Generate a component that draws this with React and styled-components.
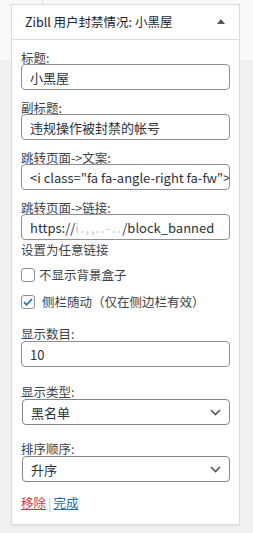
import React from "react";
import styled, { createGlobalStyle } from "styled-components";

const GlobalStyle = createGlobalStyle`
  html, body {
    margin: 0;
    padding: 0;
  }
  body {
    background: #f0f0f1;
    font-family: "Noto Sans CJK SC", "Noto Sans", sans-serif;
    color: #3c434a;
  }
`;

const Page = styled.div`
  min-height: 533px;
  padding: 4px 13px 0 11px;
  box-sizing: border-box;
  background:
    linear-gradient(#dcdcde, #dcdcde) 42px 0 / 1px 4px no-repeat,
    linear-gradient(#f9f9f9 0, #f9f9f9 60px, #f0f0f1 60px, #f0f0f1 100%);
`;

const Widget = styled.div`
  width: 229px;
  box-sizing: border-box;
  background: #fff;
  border: 1px solid #dcdcde;
  box-shadow: 0 1px 1px rgba(0, 0, 0, 0.04);
`;

const Header = styled.div`
  display: flex;
  align-items: center;
  justify-content: space-between;
  height: 34px;
  padding: 0 14px 0 13px;
  border-bottom: 1px solid #dcdcde;
`;

const Title = styled.h3`
  margin: 0;
  font-size: 12.5px;
  font-weight: 400;
  line-height: 16px;
  color: #1d2327;
`;

const Arrow = styled.span`
  width: 0;
  height: 0;
  border-left: 4px solid transparent;
  border-right: 4px solid transparent;
  border-bottom: 5px solid #50575e;
  margin-top: -1px;
`;

const Body = styled.div`
  padding: 11px 9px 14px 9px;
`;

const Field = styled.div`
  display: flex;
  flex-direction: column;
  gap: ${(p) => p.$gap || 0}px;
  margin-bottom: ${(p) => p.$mb || 11}px;
`;

const Label = styled.label`
  font-size: 12.5px;
  line-height: 13px;
  color: #3c434a;
`;

const Input = styled.div`
  height: 26px;
  box-sizing: border-box;
  border: 1px solid #8c8f94;
  border-radius: 4px;
  padding: 0 8px;
  display: flex;
  align-items: center;
  font-size: 13px;
  color: #2c3338;
  white-space: nowrap;
  overflow: hidden;
`;

const Blur = styled.span`
  color: #c4c6c9;
  letter-spacing: 1.5px;
`;

const Select = styled(Input)`
  justify-content: space-between;
  margin-left: 1px;
  padding-right: 8px;
  border-color: #7e8993;
`;

const Chevron = styled.svg`
  width: 11px;
  height: 7px;
`;

const Note = styled.div`
  font-size: 12.5px;
  line-height: 13px;
  margin: -8px 0 11px;
`;

const CheckRow = styled.label`
  display: flex;
  align-items: center;
  gap: ${(p) => p.$gap}px;
  font-size: 12.5px;
  line-height: 16px;
  margin-bottom: ${(p) => p.$mb}px;
`;

const Box = styled.span`
  width: 14px;
  height: 14px;
  box-sizing: border-box;
  border: 1px solid #8c8f94;
  border-radius: 3px;
  display: flex;
  align-items: center;
  justify-content: center;
  flex-shrink: 0;
`;

const Actions = styled.div`
  font-size: 12.5px;
  line-height: 14px;
  display: flex;
  align-items: center;
  gap: 2px;
`;

const Remove = styled.a`
  color: #d63638;
  text-decoration: underline;
`;

const Done = styled.a`
  color: #2271b1;
  text-decoration: underline;
`;

const Sep = styled.span`
  color: #c3c4c7;
`;

function Arr() {
  return (
    <Chevron viewBox="0 0 11 7">
      <path d="M1 1l4.5 4.5L10 1" fill="none" stroke="#50575e" strokeWidth="1.6" />
    </Chevron>
  );
}

export default function App() {
  return (
    <>
      <GlobalStyle />
      <Page>
        <Widget>
          <Header>
            <Title>Zibll 用户封禁情况: 小黑屋</Title>
            <Arrow />
          </Header>
          <Body>
            <Field>
              <Label>标题:</Label>
              <Input>小黑屋</Input>
            </Field>
            <Field>
              <Label>副标题:</Label>
              <Input>违规操作被封禁的帐号</Input>
            </Field>
            <Field>
              <Label>跳转页面-&gt;文案:</Label>
              <Input>&lt;i class="fa fa-angle-right fa-fw"&gt;&lt;/i&gt;</Input>
            </Field>
            <Field>
              <Label>跳转页面-&gt;链接:</Label>
              <Input>
                https://<Blur>i.,,..-..</Blur>/block_banned
              </Input>
            </Field>
            <Note>设置为任意链接</Note>
            <CheckRow $gap={4} $mb={11}>
              <Box />
              不显示背景盒子
            </CheckRow>
            <CheckRow $gap={7} $mb={17}>
              <Box>
                <svg width="12" height="12" viewBox="0 0 12 12">
                  <path d="M2 6.2l2.6 2.6L10 3" fill="none" stroke="#2271b1" strokeWidth="1.8" />
                </svg>
              </Box>
              侧栏随动（仅在侧边栏有效）
            </CheckRow>
            <Field $gap={1} $mb={18}>
              <Label>显示数目:</Label>
              <Input>10</Input>
            </Field>
            <Field $gap={1} $mb={17}>
              <Label>显示类型:</Label>
              <Select>
                黑名单
                <Arr />
              </Select>
            </Field>
            <Field $gap={1} $mb={14}>
              <Label>排序顺序:</Label>
              <Select>
                升序
                <Arr />
              </Select>
            </Field>
            <Actions>
              <Remove>移除</Remove>
              <Sep>|</Sep>
              <Done>完成</Done>
            </Actions>
          </Body>
        </Widget>
      </Page>
    </>
  );
}
